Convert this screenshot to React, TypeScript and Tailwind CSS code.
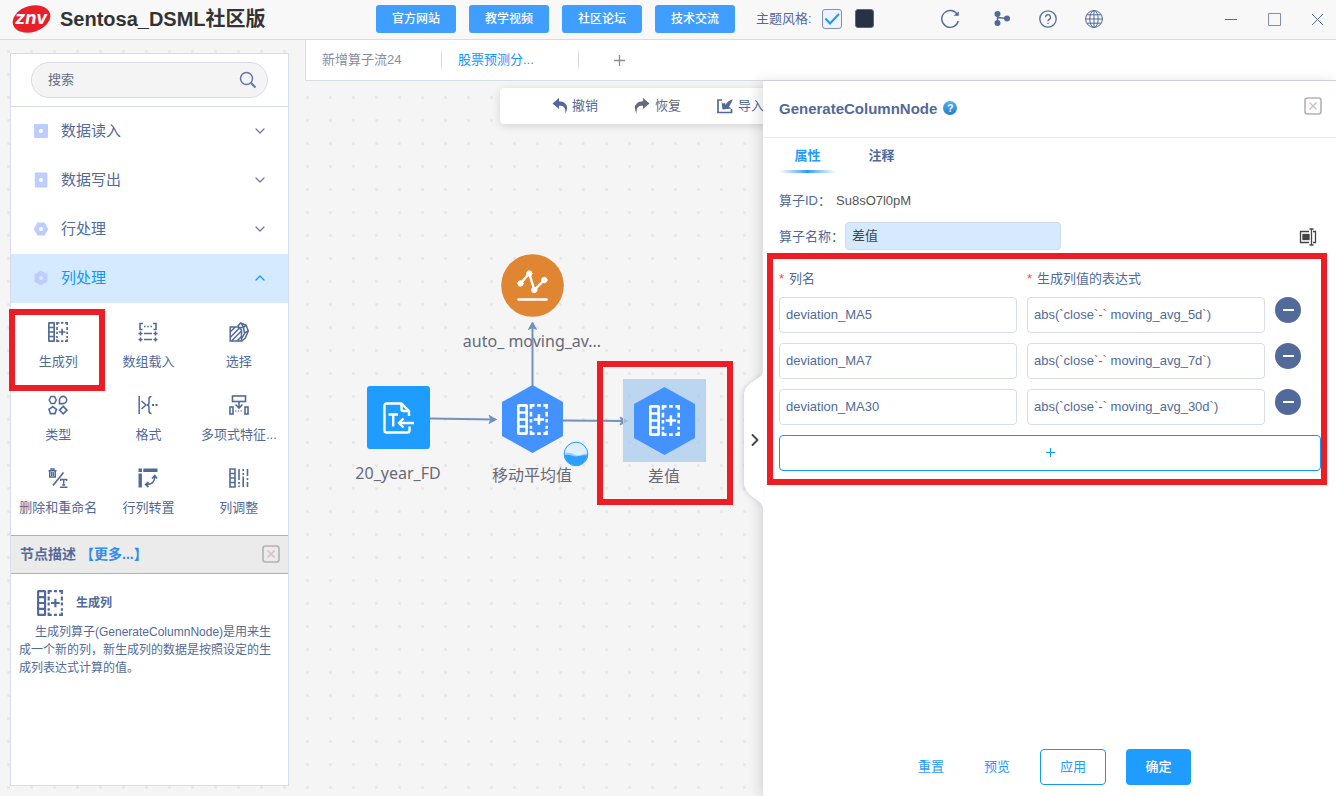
import type { ReactNode } from "react";
import { ChevronDown, ChevronUp, ChevronRight } from "lucide-react";

const uiFont = "font-['Liberation_Sans','Noto_Sans_CJK_SC',sans-serif]";

/* ---------- icons ---------- */

function GenerateColumnIcon({ className }: { className: string }) {
  return (
    <svg viewBox="0 0 30 30" fill="none" stroke="currentColor" strokeWidth="2.500" className={className}>
      <rect x="1.300" y="1.300" width="8" height="27.400" rx="0.500" />
      <path d="M1 8.200h8M1 15h8M1 21.800h8" />
      <path d="M13.500 4.500V1.300H17M19.500 1.300h3.500M25.500 1.300h3.200v3.200M28.700 7.500v4.500M28.700 14.500v3.500M28.700 21v3M28.700 26v2.700h-3.200M23 28.700h-3.500M17 28.700h-3.500V26M13.500 24v-3M13.500 18v-3.500M13.500 12V7.500" />
      <path d="M21.200 10v10M16.200 15h10" />
    </svg>
  );
}

function ArrayLoadIcon() {
  return (
    <svg viewBox="0 0 20 20" fill="none" stroke="currentColor" strokeWidth="1.600" className="size-5">
      <path d="M5 1.500H2V7.500h2.500M15 1.500h3V7.500h-2.500" />
      <path d="M6 4.500h1.500M9.200 4.500h1.600M12.500 4.500h1.500" />
      <path d="M0.500 11.500h4M2.500 9.500v4M6 11.500h8M15.500 11.500h4M17.500 9.500v4" />
      <path d="M0.500 17.500h4M2.500 15.500v4M6 17.500h8M15.500 17.500h4M17.500 15.500v4" />
    </svg>
  );
}

function SelectIcon() {
  return (
    <svg viewBox="0 0 20 20" fill="none" stroke="currentColor" strokeWidth="1.500" className="size-5">
      <path d="M1.200 5h8.300l3 3v11H1.200z" />
      <path d="M1.200 10l5-5M1.200 15.500L10.500 6M2.500 19L12.500 9M8 19l4.500-4.500" />
      <path d="M8.500 4.500L11.500 1l5.500 2.200L19.300 9l-3 7-3.500 3M12 1.200l2.500 4M9 5.500l5.500-.3L17 3.500M14.500 5.500l1 5.500 3.500-2M15.500 11.500L13 16" />
    </svg>
  );
}

function TypeIcon() {
  return (
    <svg viewBox="0 0 20 20" fill="none" stroke="currentColor" strokeWidth="1.600" className="size-5">
      <path d="M3 1.500h3.500L8.300 5 6.500 8.500H3L1.200 5z" strokeLinejoin="round" />
      <path d="M11.500 8.600V5a3.600 3.600 0 1 1 3.600 3.600z" />
      <path d="M4.700 11.700l3.700 2.700-1.400 4.200H2.400L1 14.400z" />
      <path d="M15.200 11.400l3.700 3.700-3.700 3.700-3.700-3.700z" />
    </svg>
  );
}

function FormatIcon() {
  return (
    <svg viewBox="0 0 20 20" fill="none" stroke="currentColor" strokeWidth="1.500" className="size-5">
      <path d="M1.200 1v18M3.500 6l4.500 4-4.500 4" />
      <path d="M13.500 1.500c-2 0-2.500 1-2.500 2.500v3.500c0 1.500-.5 2.500-2 2.500 1.500 0 2 1 2 2.500V16c0 1.500.5 2.500 2.500 2.500" />
      <path d="M14 10h2M17.500 10h2" strokeWidth="1.800" />
    </svg>
  );
}

function PolynomialIcon() {
  return (
    <svg viewBox="0 0 20 20" fill="none" stroke="currentColor" strokeWidth="1.600" className="size-5">
      <rect x="3.500" y="1" width="13" height="5.500" />
      <path d="M10 6.500v6M6.500 9.500L10 13l3.500-3.500" />
      <rect x="1" y="12" width="3" height="7" />
      <rect x="16" y="12" width="3" height="7" />
      <path d="M6 16h8" strokeDasharray="1.500 1.200" strokeWidth="1.200" />
    </svg>
  );
}

function DeleteRenameIcon() {
  return (
    <svg viewBox="0 0 20 20" fill="none" stroke="currentColor" strokeWidth="1.400" className="size-5">
      <path d="M0.500 2.700h8M3 2.500V1h3v1.500M1.700 2.500v6.500h5.600V2.500M3.600 4v4M5.400 4v4" />
      <path d="M5 17.500L15.500 4.500" strokeWidth="1.700" />
      <path d="M12.700 13v-1.500h6V13M15.700 11.500v5.500M14.200 17h3M12 19.300h7.500" />
    </svg>
  );
}

function TransposeIcon() {
  return (
    <svg viewBox="0 0 20 20" fill="none" stroke="currentColor" className="size-5">
      <path d="M0.500 2.200h3.500M5.300 2.200h14.200M2.200 5.500v14" strokeWidth="3.400" />
      <path d="M16.800 8.500c0 5.500-3 8.300-9 8" strokeWidth="1.600" />
      <path d="M14 10.500l2.800-3L19 10.500M10.500 14L7.700 16.500l2.800 2.500" strokeWidth="1.700" />
    </svg>
  );
}

function ColumnAdjustIcon() {
  return (
    <svg viewBox="0 0 20 20" fill="none" stroke="currentColor" strokeWidth="1.600" className="size-5">
      <path d="M1 1h5v18H1zM1 5.500h5M1 10h5M1 14.500h5" />
      <path d="M10 1v11M10 14v2M10 17.500V19M14.200 1v2M14.200 5v2M14.200 8.500V19M18.500 1v7M18.500 10v2M18.500 14v5" />
    </svg>
  );
}

function CloseBoxIcon() {
  return (
    <svg viewBox="0 0 18 18" fill="none" className="size-[18px]">
      <rect x="1" y="1" width="16" height="16" rx="2.500" stroke="#b2b2b2" strokeWidth="1.600" />
      <path d="M5.500 5.500l7 7M12.500 5.500l-7 7" stroke="#d3c0c0" strokeWidth="1.500" />
    </svg>
  );
}

function CategoryIcon({ shape }: { shape: string }) {
  return (
    <svg viewBox="0 0 16 16" className="size-4 text-[#bccdff]" fill="currentColor">
      {shape === "square" && <rect x="1" y="1" width="14" height="14" rx="1" />}
      {shape === "portrait" && <rect x="1.800" y="0.500" width="12.600" height="15" rx="1" />}
      {shape === "hexFlat" && <path d="M4.500 1.500h7L15.300 8l-3.800 6.500h-7L.7 8z" />}
      {shape === "hexTall" && <path d="M8 .5l6.500 3.800v7.400L8 15.500l-6.500-3.800V4.300z" />}
      <circle cx="8" cy="8" r="2" fill={shape === "hexTall" ? "#d6eaff" : "#fff"} />
    </svg>
  );
}

/* ---------- header ---------- */

const links = ["官方网站", "教学视频", "社区论坛", "技术交流"];

function Header() {
  return (
    <header className="flex h-10 shrink-0 items-start border-b border-[#d8dbe8] bg-[#f8f8f8] text-[#526a99]">
      <div className="flex w-[376px] shrink-0 items-center gap-2 pl-3 pt-1">
        <svg viewBox="0 0 40 30" className="h-[30px] w-10">
          <ellipse cx="19.500" cy="15" rx="19.300" ry="13" fill="#e8202a" transform="rotate(-17 19.500 15)" />
          <text x="19" y="20" textAnchor="middle" fill="#fff" fontFamily="Inter" fontWeight="700" fontStyle="italic" fontSize="18">
            znv
          </text>
        </svg>
        <h1 className="text-xl leading-[26px] font-bold text-[#333]">Sentosa_DSML社区版</h1>
      </div>
      <nav className="flex gap-[13px] pt-[5px]">
        {links.map((l) => (
          <button key={l} className="h-7 w-20 rounded-[3px] bg-[#409eff] text-xs font-medium text-white">
            {l}
          </button>
        ))}
      </nav>
      <div className="ml-[21px] flex h-[37px] items-center text-[13px]">
        <label htmlFor="light-theme">主题风格:</label>
        <span className="relative ml-[10px] size-5">
          <input
            id="light-theme"
            type="checkbox"
            defaultChecked
            className="block size-5 appearance-none rounded-[3px] border border-[#8590b0] bg-[#edf3ff]"
          />
          <svg viewBox="0 0 20 20" fill="none" stroke="#2396f7" strokeWidth="2" className="pointer-events-none absolute inset-0">
            <path d="M3.500 9.500l4.500 5L17 5" />
          </svg>
        </span>
        <button aria-label="深色主题" className="ml-[13px] size-[19px] rounded-[3px] border border-[#5d6782] bg-[#293146]" />
      </div>
      <div className="ml-[66px] flex h-[37px] items-center gap-7">
        <button aria-label="刷新">
          <svg viewBox="0 0 20 20" fill="none" stroke="currentColor" strokeWidth="1.400" className="size-5">
            <path d="M17.300 5.500A8.400 8.400 0 1 0 18.300 12" />
            <path d="M13.500 6.800h5.300V2.500z" fill="currentColor" stroke="none" />
          </svg>
        </button>
        <button aria-label="流程" className="ml-[5px]">
          <svg viewBox="0 0 18 18" fill="currentColor" className="size-[18px]">
            <circle cx="4.500" cy="4" r="3" />
            <circle cx="4.500" cy="13" r="3" />
            <circle cx="14" cy="8.500" r="3" />
            <path d="M4.500 4v9M4.500 7.500L14 8.500" stroke="currentColor" strokeWidth="1.400" />
          </svg>
        </button>
        <button aria-label="帮助">
          <svg viewBox="0 0 18 18" fill="none" stroke="currentColor" strokeWidth="1.300" className="size-[18px]">
            <circle cx="9" cy="9" r="8.200" />
            <path d="M6.500 7.200a2.500 2.500 0 1 1 3.700 2.200c-.9.500-1.200.9-1.200 1.900M9 12.700v1.400" />
          </svg>
        </button>
        <button aria-label="语言">
          <svg viewBox="0 0 18 18" fill="none" stroke="currentColor" strokeWidth="1" className="size-[18px]">
            <circle cx="9" cy="9" r="8.400" />
            <ellipse cx="9" cy="9" rx="4.200" ry="8.400" />
            <path d="M9 .6v16.800M.6 9h16.800M1.800 4.800h14.400M1.800 13.200h14.400" />
          </svg>
        </button>
      </div>
      <div className="ml-auto flex h-[39px] items-center gap-[30px] pr-3">
        <button aria-label="最小化">
          <svg viewBox="0 0 13 13" stroke="currentColor" className="size-[13px]"><path d="M0 6.500h12" /></svg>
        </button>
        <button aria-label="最大化">
          <svg viewBox="0 0 13 13" stroke="#7f8db3" fill="none" className="size-[13px]"><path d="M.5.5h12v12H.5z" /></svg>
        </button>
        <button aria-label="关闭">
          <svg viewBox="0 0 13 13" stroke="currentColor" className="size-[13px]"><path d="M1 1l11 11M12 1L1 12" /></svg>
        </button>
      </div>
    </header>
  );
}

/* ---------- sidebar ---------- */

const categories = [
  { name: "数据读入", shape: "square" },
  { name: "数据写出", shape: "portrait" },
  { name: "行处理", shape: "hexFlat" },
  { name: "列处理", shape: "hexTall", open: true },
];

const operators: { name: string; icon: ReactNode; marked?: boolean }[] = [
  { name: "生成列", icon: <GenerateColumnIcon className="size-5" />, marked: true },
  { name: "数组载入", icon: <ArrayLoadIcon /> },
  { name: "选择", icon: <SelectIcon /> },
  { name: "类型", icon: <TypeIcon /> },
  { name: "格式", icon: <FormatIcon /> },
  { name: "多项式特征...", icon: <PolynomialIcon /> },
  { name: "删除和重命名", icon: <DeleteRenameIcon /> },
  { name: "行列转置", icon: <TransposeIcon /> },
  { name: "列调整", icon: <ColumnAdjustIcon /> },
];

function Sidebar() {
  return (
    <aside className="flex w-[279px] shrink-0 flex-col border border-[#d8dbe8] bg-white text-[#526a99]">
      <div className="border-b border-[#d8dbe8] px-5 py-2">
        <label className="flex h-9 items-center rounded-[18px] border border-[#d8dbe8] bg-[#f4f4f4] pr-[10px] pl-4">
          <input
            type="search"
            placeholder="搜索"
            aria-label="搜索"
            className="min-w-0 flex-1 bg-transparent text-[13px] outline-none placeholder:text-[#666d82]"
          />
          <svg viewBox="0 0 18 18" fill="none" stroke="#6577ab" strokeWidth="1.500" className="size-[18px]">
            <circle cx="7.500" cy="7.500" r="6" />
            <path d="M11.800 11.800l4.700 4.700" strokeWidth="2" />
          </svg>
        </label>
      </div>
      {categories.map((c) => (
        <button
          key={c.name}
          className={
            c.open
              ? "flex h-[49px] shrink-0 items-center bg-[#d6eaff] pr-5 pb-px pl-[22px] text-[15px] text-[#0f96ff]"
              : "flex h-[49px] shrink-0 items-center pr-5 pb-px pl-[22px] text-[15px]"
          }
        >
          <CategoryIcon shape={c.shape} />
          <span className="ml-3">{c.name}</span>
          {c.open ? (
            <ChevronUp className="ml-auto size-4" strokeWidth={1.800} />
          ) : (
            <ChevronDown className="ml-auto size-4 text-[#6577ab]" strokeWidth={1.800} />
          )}
        </button>
      ))}
      <div className="grid grid-cols-3 pt-[6px] pr-1 pb-[7px] pl-[2px]">
        {operators.map((o) => (
          <button key={o.name} className="relative flex h-[73px] flex-col items-center pt-[13px]">
            {o.icon}
            <span className="mt-[10px] text-[13px] leading-5 whitespace-nowrap">{o.name}</span>
            {o.marked && <span className="absolute top-0 -left-1 h-[82px] w-24 border-[6px] border-[#ee1c25]" />}
          </button>
        ))}
      </div>
      <div className="flex h-[39px] shrink-0 items-center border-y border-[#b0b0b0] bg-[#ebebeb] pr-2 pb-px pl-[9px] text-sm font-bold">
        <span>节点描述</span>
        <a href="#more" className="ml-1 text-[#2d8cf0]">【更多...】</a>
        <button aria-label="关闭描述" className="ml-auto"><CloseBoxIcon /></button>
      </div>
      <div className="px-2 pt-4 text-xs leading-[18px]">
        <div className="flex items-center gap-[13px] pl-[18px]">
          <GenerateColumnIcon className="size-[26px]" />
          <strong>生成列</strong>
        </div>
        <p className="mt-[7px] indent-4">
          生成列算子(GenerateColumnNode)是用来生成一个新的列，新生成列的数据是按照设定的生成列表达式计算的值。
        </p>
      </div>
    </aside>
  );
}

/* ---------- workspace ---------- */

function Tabs() {
  return (
    <div className="flex h-[41px] shrink-0 items-stretch border-b border-l border-[#d8dbe8] bg-white text-[13px]">
      <button className="flex w-[136px] items-center justify-between pb-px pl-4 text-[#888da0]">
        新增算子流24
        <span className="h-7 w-px bg-gradient-to-b from-white via-[#cdd0e2] to-white" />
      </button>
      <button className="flex w-[137px] items-center justify-between pb-px pl-4 text-[#0f96ff]">
        股票预测分...
        <span className="h-7 w-px bg-gradient-to-b from-white via-[#cdd0e2] to-white" />
      </button>
      <button aria-label="新建" className="flex w-20 items-center justify-center pt-px text-[#8a8d99]">
        <svg viewBox="0 0 11 11" stroke="currentColor" strokeWidth="1.300" className="size-[11px]"><path d="M5.500 0v11M0 5.500h11" /></svg>
      </button>
    </div>
  );
}

function Toolbar() {
  return (
    <div className="absolute top-[7px] left-[195px] flex h-9 w-[420px] items-center gap-9 rounded bg-white pb-px pl-[52px] text-[13px] text-[#526a99] shadow-[0_2px_8px_rgba(0,0,0,0.14)]">
      <button className="flex items-center gap-1">
        <svg viewBox="0 0 16 16" fill="currentColor" className="size-4"><path d="M7 0L0.500 5.500 7 11V7.700c4.500-.4 7 2 6.300 7.800C17.500 9 14 3.300 7 3.300z" /></svg>
        撤销
      </button>
      <button className="flex items-center gap-[5px] text-[#666a78]">
        <svg viewBox="0 0 16 16" fill="currentColor" className="size-4"><path d="M9 0l6.500 5.500L9 11V7.700c-4.500-.4-7 2-6.300 7.800C-1.500 9 2 3.300 9 3.300z" /></svg>
        恢复
      </button>
      <button className="flex items-center gap-[5px]">
        <svg viewBox="0 0 16 16" fill="none" stroke="currentColor" strokeWidth="1.700" className="size-4">
          <path d="M5 2H1v12.500h13.500V11" />
          <path d="M4.500 4l1.500 1.800L8 4.500 8.500 7C10 4 12 2.500 15.800 1.200 14.500 4 14 5.500 12 8.800l2.500 1.700-9 1z" fill="currentColor" stroke="none" />
        </svg>
        导入
      </button>
    </div>
  );
}

function Hexagon() {
  return (
    <span className="relative flex h-[68px] w-[61px] items-center justify-center text-white">
      <svg viewBox="0 0 61 68" className="absolute inset-0"><path d="M30.500 0L61 17v34L30.500 68 0 51V17z" fill="#4392ff" /></svg>
      <GenerateColumnIcon className="relative size-[31px]" />
    </span>
  );
}

function Canvas() {
  const label =
    "font-['Noto_Sans','Noto_Sans_CJK_SC',sans-serif] text-base leading-6 whitespace-nowrap text-[#666a78]";
  return (
    <main className="relative min-w-0 flex-1 overflow-hidden">
      <Toolbar />
      <div className="absolute top-[173px] left-[147px] flex w-40 flex-col items-center">
        <svg viewBox="0 0 63 63" className="size-[63px]">
          <circle cx="31.500" cy="31.500" r="31.300" fill="#e08531" />
          <g stroke="#fff" fill="#fff" strokeLinecap="round">
            <path d="M19.500 29.500L28.300 19.500 33.300 36l10-10" fill="none" strokeWidth="2.400" />
            <circle cx="19.500" cy="29.500" r="2.700" /><circle cx="28.300" cy="19.500" r="2.700" />
            <circle cx="33.300" cy="36" r="2.700" /><circle cx="43.300" cy="26" r="2.700" />
            <path d="M17.500 45.500h28" strokeWidth="2.600" />
          </g>
        </svg>
        <span className={`mt-3 ${label}`}>auto_ moving_av...</span>
      </div>
      <svg className="absolute inset-0 h-full w-full" fill="none" stroke="#7391bd" strokeWidth="2">
        <path d="M125 337.500L190 338.500M258 339.500l64 0.500M227.500 305v-62" />
        <path d="M184 334.500l7.500 4-7.500 4 2-4zM315 336l7.500 4-7.500 4 2-4zM223.500 248.500l4-7.500 4 7.500-4-2z" fill="#7391bd" strokeWidth="1" />
      </svg>
      <div className="absolute top-[305px] left-[33px] flex w-[120px] flex-col items-center">
        <span className="flex size-[63px] items-center justify-center rounded-[3px] bg-[#1f9cff]">
          <svg viewBox="0 0 32 32" fill="none" stroke="#fff" strokeWidth="2.400" className="size-8" strokeLinejoin="round">
            <path d="M27 14V9l-7.500-7.500H4.500a2 2 0 0 0-2 2v25a2 2 0 0 0 2 2h21a2 2 0 0 0 2-2v-4" />
            <path d="M19.500 1.500V7a2 2 0 0 0 2 2H27" />
            <path d="M6.500 12.500h9.500M11.200 12.500V24.500M32 21H17.500M21.500 16.500L17 21l4.500 4.500" strokeLinejoin="miter" />
          </svg>
        </span>
        <span className={`mt-3 ${label}`}>20_year_FD</span>
      </div>
      <div className="absolute top-[304px] left-[167px] flex w-[120px] flex-col items-center">
        <Hexagon />
        <span className={`mt-[10px] ${label}`}>移动平均值</span>
        <svg viewBox="0 0 26 26" className="absolute top-[56px] left-[91px] size-[26px]">
          <circle cx="13" cy="13" r="12" fill="#deeefa" />
          <path d="M1.500 13c4-2.500 7-1 11 1s8-2 12-1.500A12 12 0 0 1 1.500 13z" fill="#94cdfb" />
          <path d="M1.200 15c4-3 8 1 12 .5s8-1.500 11.500-1A12 12 0 0 1 1.200 15z" fill="#2d9fff" />
          <circle cx="13" cy="13" r="11.800" fill="none" stroke="#1f9cff" />
        </svg>
      </div>
      <div className="absolute top-[298px] left-[299px] flex w-[120px] flex-col items-center">
        <span className="flex size-[83px] items-center justify-center border border-[#b8d3f5] bg-[#aacbed]/75">
          <Hexagon />
        </span>
        <span className={`mt-[2px] ${label}`}>差值</span>
      </div>
      <div className="absolute top-[280px] left-[292px] h-36 w-[136px] border-[6px] border-[#ee1c25]" />
    </main>
  );
}

/* ---------- property panel ---------- */

const rows = [
  { name: "deviation_MA5", expr: "abs(`close`-` moving_avg_5d`)" },
  { name: "deviation_MA7", expr: "abs(`close`-` moving_avg_7d`)" },
  { name: "deviation_MA30", expr: "abs(`close`-` moving_avg_30d`)" },
];

function PropertyPanel() {
  const field = "h-9 w-full min-w-0 rounded border border-[#d8dbe8] bg-white px-[6px] pb-[2px] outline-none";
  return (
    <section className="relative flex w-[573px] shrink-0 flex-col bg-white text-[13px] text-[#526a99] shadow-[-4px_0_12px_rgba(0,0,0,0.12)]">
      <button aria-label="收起" className="absolute top-[291px] -left-5 h-[136px] w-5">
        <svg viewBox="0 0 20 136" className="absolute inset-0 drop-shadow-[-2px_0_2px_rgba(160,165,190,0.35)]">
          <path d="M20 0C19 8 1 9 1 24v86c0 15 18 17 19 26z" fill="#fff" />
        </svg>
        <ChevronRight className="absolute top-[58px] left-[2px] size-5 text-[#444]" strokeWidth={2.200} />
      </button>
      <header className="flex h-[57px] shrink-0 items-start border-b border-[#ececf0] pr-[14px] pl-4">
        <h2 className="pt-[17px] text-[15px] leading-[22px] font-bold">GenerateColumnNode</h2>
        <button aria-label="帮助" className="mt-[20px] ml-[6px] flex size-[14px] items-center justify-center rounded-full bg-gradient-to-b from-[#54b0ee] to-[#2280c6] text-[10px] font-bold text-white">
          ?
        </button>
        <button aria-label="关闭" className="mt-4 ml-auto"><CloseBoxIcon /></button>
      </header>
      <nav className="flex gap-[17px] pl-4 font-bold">
        <button className="relative h-[35px] w-[57px] text-[#1f9cff]">
          属性
          <span className="absolute bottom-0 left-0 h-[3px] w-full bg-gradient-to-r from-white via-[#1f9cff] to-white" />
        </button>
        <button className="h-[35px] w-[57px]">注释</button>
      </nav>
      <div className="mt-[18px] flex h-5 items-center pl-4">
        <span className="w-[57px]">算子ID：</span>
        <span className="text-[#555]">Su8sO7l0pM</span>
      </div>
      <div className="mt-[11px] flex h-7 items-center pr-[19px] pl-4">
        <label htmlFor="node-name" className="w-[66px] pt-[2px] whitespace-nowrap">算子名称：</label>
        <input
          id="node-name"
          defaultValue="差值"
          className="h-7 w-[216px] rounded border border-[#d3d9e6] bg-[#d6eaff] px-[6px] pb-[3px] text-[#444] outline-none"
        />
        <button aria-label="变量" className="ml-auto pt-[2px] text-[#444]">
          <svg viewBox="0 0 18 18" fill="none" stroke="currentColor" strokeWidth="1.300" className="size-[18px]">
            <path d="M10 3.500H1.500v11H10M14 3.500h2.500v11H14M10.500 1h4M12.500 1v16M10.500 17h4" />
            <rect x="4" y="6.500" width="6" height="5" fill="currentColor" />
          </svg>
        </button>
      </div>
      <div className="relative mt-[15px] flex flex-col gap-[10px] pr-[15px] pl-4">
        <div className="flex h-[22px] gap-[10px] leading-[28px]">
          <span className="w-[238px]"><span className="mr-[5px] text-[#f44]">*</span>列名</span>
          <span className="w-[238px]"><span className="mr-[5px] text-[#f44]">*</span>生成列值的表达式</span>
        </div>
        {rows.map((r) => (
          <div key={r.name} className="flex gap-[10px]">
            <input aria-label="列名" defaultValue={r.name} className={field} />
            <input aria-label="生成列值的表达式" defaultValue={r.expr} className={field} />
            <button aria-label="删除" className="mr-5 flex size-[26px] shrink-0 items-center justify-center rounded-full bg-[#526a99]">
              <span className="h-[2px] w-[11px] bg-white" />
            </button>
          </div>
        ))}
        <button aria-label="添加" className="flex h-9 items-center justify-center rounded border border-[#0f96ff] pb-px text-[#0f96ff]">
          <svg viewBox="0 0 9 9" stroke="currentColor" className="size-[9px]"><path d="M4.500 0v9M0 4.500h9" /></svg>
        </button>
        <div className="pointer-events-none absolute -top-[12px] right-[9px] -bottom-[14px] left-1 border-[6px] border-[#ee1c25]" />
      </div>
      <footer className="mt-auto flex justify-end gap-5 pr-[145px] pb-[11px] text-[#1f9cff]">
        <button className="h-9 w-[46px]">重置</button>
        <button className="h-9 w-[46px]">预览</button>
        <button className="h-9 w-[66px] rounded border border-[#0f96ff]">应用</button>
        <button className="h-9 w-[65px] rounded bg-[#1f9cff] font-medium text-white">确定</button>
      </footer>
    </section>
  );
}

export default function App() {
  return (
    <div className={`flex min-h-screen flex-col bg-[#f5f5f5] ${uiFont}`}>
      <Header />
      <div className="flex flex-1 bg-[radial-gradient(circle,#e8e8e8_1.2px,transparent_2px)] bg-[length:23px_23px] bg-[position:-3px_0]">
        <div className="flex pt-[13px] pr-4 pb-[10px] pl-[10px]">
          <Sidebar />
        </div>
        <div className="flex min-w-0 flex-1 flex-col">
          <Tabs />
          <div className="flex flex-1">
            <Canvas />
            <PropertyPanel />
          </div>
        </div>
      </div>
    </div>
  );
}
